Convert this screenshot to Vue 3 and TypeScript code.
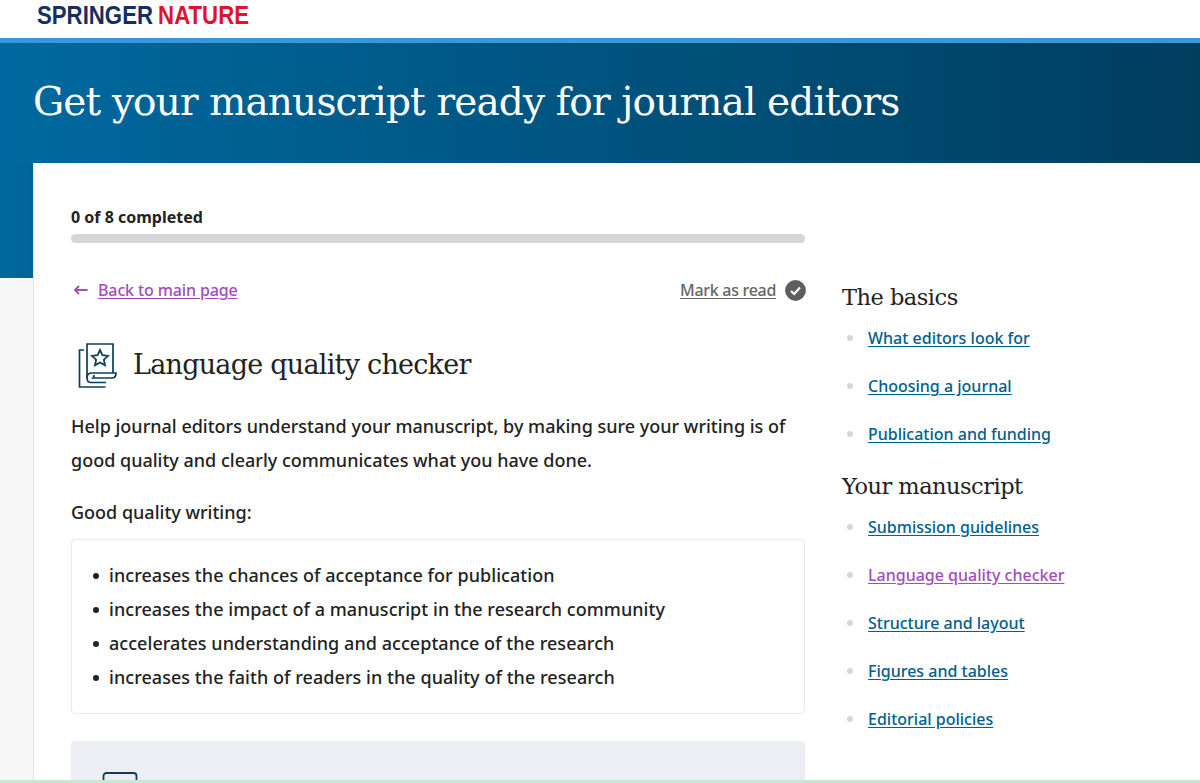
<script setup lang="ts">
const items1 = [
  { t: 'What editors look for' },
  { t: 'Choosing a journal' },
  { t: 'Publication and funding' },
]
const items2 = [
  { t: 'Submission guidelines' },
  { t: 'Language quality checker', v: true },
  { t: 'Structure and layout' },
  { t: 'Figures and tables' },
  { t: 'Editorial policies' },
]
const bullets = [
  'increases the chances of acceptance for publication',
  'increases the impact of a manuscript in the research community',
  'accelerates understanding and acceptance of the research',
  'increases the faith of readers in the quality of the research',
]
</script>

<template>
  <div class="page">
    <header class="logo-bar">
      <span class="logo"><span class="navy">SPRINGER</span><span class="red">NATURE</span></span>
    </header>
    <section class="hero">
      <h1>Get your manuscript ready for journal editors</h1>
    </section>
    <div class="body">
      <div class="side-blue"></div>
      <div class="panel">
        <main class="content">
          <div class="progress-label">0 of 8 completed</div>
          <div class="progress"></div>
          <div class="nav-row">
            <div class="back">
              <svg width="15" height="10" viewBox="0 0 15 10" fill="none" stroke="#a24bc2" stroke-width="1.8">
                <path d="M14.5 5H2M6 1 2 5l4 4" />
              </svg>
              <a class="visited">Back to main page</a>
            </div>
            <div class="mark">
              <a>Mark as read</a>
              <svg width="21" height="21" viewBox="0 0 21 21">
                <circle cx="10.5" cy="10.5" r="10.4" fill="#5e5e5e" />
                <path d="M6 11l3.2 3L15 7.6" fill="none" stroke="#fff" stroke-width="2.2" />
              </svg>
            </div>
          </div>
          <div class="title-row">
            <svg width="40" height="46" viewBox="0 0 40 46" fill="none" stroke="#0b3f5c" stroke-width="1.7">
              <path d="M6 8H1.500v37h26" />
              <path d="M9 36V2h26v29" />
              <path d="M9 36c0-4 3-5 5-5h24c0 3-1 5-4 5H15c1-1 1-2 1-3" />
              <path d="M9 36c0 3 2 4.500 4 4.500h15" />
              <path d="m22 8 2.400 5.200 5.600.7-4.100 3.800 1.100 5.600-5-2.800-5 2.800 1.100-5.600-4.100-3.800 5.600-.7z" stroke-width="1.8" />
            </svg>
            <h2>Language quality checker</h2>
          </div>
          <p class="intro">Help journal editors understand your manuscript, by making sure your writing is of good quality and clearly communicates what you have done.</p>
          <p class="lead">Good quality writing:</p>
          <ul class="box">
            <li v-for="b in bullets" :key="b">{{ b }}</li>
          </ul>
          <div class="note">
            <svg width="36" height="10" viewBox="0 0 36 10" fill="none" stroke="#0b3f5c" stroke-width="1.8">
              <path d="M1.500 10V4a3 3 0 0 1 3-3h27a3 3 0 0 1 3 3v6" />
            </svg>
          </div>
        </main>
        <aside class="side">
          <h3>The basics</h3>
          <ul>
            <li v-for="i in items1" :key="i.t"><a>{{ i.t }}</a></li>
          </ul>
          <h3 class="second">Your manuscript</h3>
          <ul>
            <li v-for="i in items2" :key="i.t"><a :class="{ visited: i.v }">{{ i.t }}</a></li>
          </ul>
        </aside>
      </div>
    </div>
    <div class="strip"></div>
  </div>
</template>

<style>
html, body { margin: 0; background: #fff; overflow: hidden; }
</style>

<style scoped>
.page {
  width: 1200px;
  height: 783px;
  overflow: hidden;
  display: flex;
  flex-direction: column;
  font-family: "Noto Sans", sans-serif;
  color: #222;
  background: #f7f7f7;
}
.logo-bar { height: 38px; flex: none; background: #fff; box-sizing: border-box; padding-left: 37px; }
.logo {
  display: inline-flex;
  gap: 6px;
  font-family: "Liberation Sans", sans-serif;
  font-weight: 700;
  font-size: 26px;
  line-height: 30px;
  white-space: nowrap;
  transform: scaleX(0.854);
  transform-origin: 0 0;
}
.navy { color: #15305f; }
.red { color: #e0132e; }
.hero {
  flex: none;
  height: 125px;
  box-sizing: border-box;
  border-top: 5px solid #3a98d8;
  background: linear-gradient(90deg, #00699f 0%, #003e5f 100%);
  padding-left: 33px;
}
h1 {
  margin: 0;
  padding-top: 33px;
  font-family: "DejaVu Serif", serif;
  font-weight: 400;
  font-size: 39px;
  line-height: 52px;
  letter-spacing: -0.85px;
  color: #fff;
  white-space: nowrap;
}
.body { flex: 1; min-height: 0; display: flex; align-items: flex-start; }
.side-blue { width: 33px; height: 115px; flex: none; background: linear-gradient(90deg, #00699f, #00649a); }
.panel {
  flex: 1;
  align-self: stretch;
  min-width: 0;
  background: #fff;
  box-shadow: inset 1px 0 0 #e6e6e6;
  display: flex;
  padding: 44px 0 0 38px;
}
.content { width: 734px; flex: none; }
.progress-label { font-size: 16px; font-weight: 700; line-height: 21px; color: #222; }
.progress { height: 9px; margin-top: 6px; border-radius: 5px; background: #d6d6d6; }
.nav-row { display: flex; justify-content: space-between; align-items: center; margin-top: 32px; height: 30px; }
.back { display: flex; align-items: center; gap: 10px; margin-left: 2px; }
a { font-size: 16px; font-weight: 500; line-height: 22px; text-decoration: underline; text-underline-offset: 2px; color: #00608f; white-space: nowrap; }
a.visited { color: #a24bc2; }
.back a { letter-spacing: -0.12px; }
.mark { display: flex; align-items: center; gap: 9px; margin-right: -1px; }
.mark a { color: #666; letter-spacing: -0.3px; }
.title-row { display: flex; align-items: center; gap: 15px; margin: 37px 0 0 7px; height: 46px; }
h2 { margin: 0; font-family: "DejaVu Serif", serif; font-weight: 400; font-size: 27px; letter-spacing: -0.75px; line-height: 36px; color: #222; }
.intro { margin: 21px 0 0; font-size: 18px; font-weight: 500; line-height: 34px; color: #222; }
.lead { margin: 18px 0 0; font-size: 18px; font-weight: 500; line-height: 34px; }
.box {
  list-style: none;
  margin: 10px 0 0;
  padding: 18px 20px 19px 37px;
  border: 1px solid #e6e9ed;
  border-radius: 4px;
}
.box li { position: relative; font-size: 18px; font-weight: 500; line-height: 34px; letter-spacing: 0.05px; white-space: nowrap; }
.box li::before {
  content: "";
  position: absolute;
  left: -16px;
  top: 15px;
  width: 6px;
  height: 6px;
  border-radius: 50%;
  background: #222;
}
.note { height: 80px; margin-top: 27px; background: #ebeff4; border-radius: 4px 4px 0 0; padding: 31px 0 0 31px; box-sizing: border-box; }
.note svg { display: block; }
.side { margin-left: 37px; width: 320px; padding-top: 74px; }
h3 { margin: 0; font-family: "DejaVu Serif", serif; font-weight: 400; font-size: 22.5px; letter-spacing: -0.5px; line-height: 32px; color: #222; }
.second { margin-top: 13px; }
.side ul { list-style: none; margin: 0; padding: 0; }
.side li { position: relative; height: 48px; padding: 14px 0 0 26px; box-sizing: border-box; }
.side li::before {
  content: "";
  position: absolute;
  left: 5px;
  top: 22px;
  width: 6px;
  height: 6px;
  border-radius: 50%;
  background: #d4d8dc;
}
.strip { height: 3px; flex: none; background: #c6e8d0; }
</style>
